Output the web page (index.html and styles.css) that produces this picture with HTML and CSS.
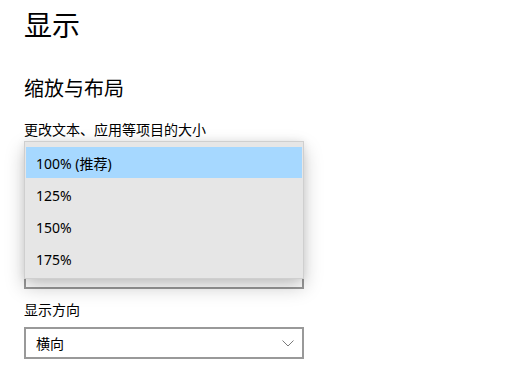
FILE: index.html
```html
<!DOCTYPE html>
<html lang="zh-CN">
<head>
<meta charset="utf-8">
<link rel="stylesheet" href="styles.css">
</head>
<body>
<div class="page">
  <h1 class="title">显示</h1>
  <h2 class="section">缩放与布局</h2>
  <div class="label">更改文本、应用等项目的大小</div>
  <div class="stack">
    <div class="combo"></div>
    <div class="popup">
      <div class="item selected">100% (推荐)</div>
      <div class="item">125%</div>
      <div class="item">150%</div>
      <div class="item">175%</div>
    </div>
  </div>
  <div class="label orient-label">显示方向</div>
  <div class="combo">
    <span>横向</span>
    <svg class="chev" width="12" height="7" viewBox="0 0 12 7"><path d="M0.5 0.5 L6 6 L11.5 0.5" fill="none" stroke="#7a7a7a" stroke-width="1"/></svg>
  </div>
</div>
</body>
</html>
```
FILE: styles.css
```css
* { box-sizing: border-box; }
html, body { margin: 0; padding: 0; background: #fff; }
body {
  font-family: "Noto Sans", "Noto Sans CJK SC", sans-serif;
  color: #000;
  width: 520px;
  height: 390px;
  overflow: hidden;
}
.page { padding: 0 0 0 24px; }
.title {
  margin: 0;
  padding-top: 4px;
  font-size: 28px;
  font-weight: 400;
  line-height: 40px;
  font-family: "Noto Sans CJK SC", sans-serif;
}
.section {
  margin: 0;
  padding-top: 30px;
  font-size: 20px;
  font-weight: 400;
  line-height: 28px;
  font-family: "Noto Sans CJK SC", sans-serif;
}
.label {
  margin-top: 17px;
  font-size: 14px;
  line-height: 20px;
  font-family: "Noto Sans CJK SC", sans-serif;
}
.stack {
  position: relative;
  width: 280px;
  margin-top: 2px;
  height: 148px;
  display: flex;
  flex-direction: column;
  justify-content: flex-end;
}
.combo {
  width: 280px;
  height: 32px;
  border: 2px solid #999;
  display: flex;
  align-items: center;
  justify-content: space-between;
  padding: 0 8px 0 10px;
  font-size: 14px;
  font-family: "Noto Sans CJK SC", sans-serif;
  background: #fff;
}
.popup {
  position: absolute;
  left: 0;
  top: 0;
  width: 280px;
  height: 138px;
  background: #e6e6e6;
  border: 1px solid #cfcfcf;
  padding: 5px 1px 0 1px;
  box-shadow: 0 8px 18px rgba(0,0,0,0.22), 0 0 8px rgba(0,0,0,0.08);
}
.item {
  height: 32px;
  display: flex;
  align-items: center;
  padding-left: 10px;
  font-size: 14px;
  font-family: "Noto Sans", "Noto Sans CJK SC", sans-serif;
}
.item.selected { background: #a6d8ff; height: 31px; margin-bottom: 1px; }
.orient-label { margin-top: 10px; }
.orient-label + .combo { margin-top: 8px; }
```
